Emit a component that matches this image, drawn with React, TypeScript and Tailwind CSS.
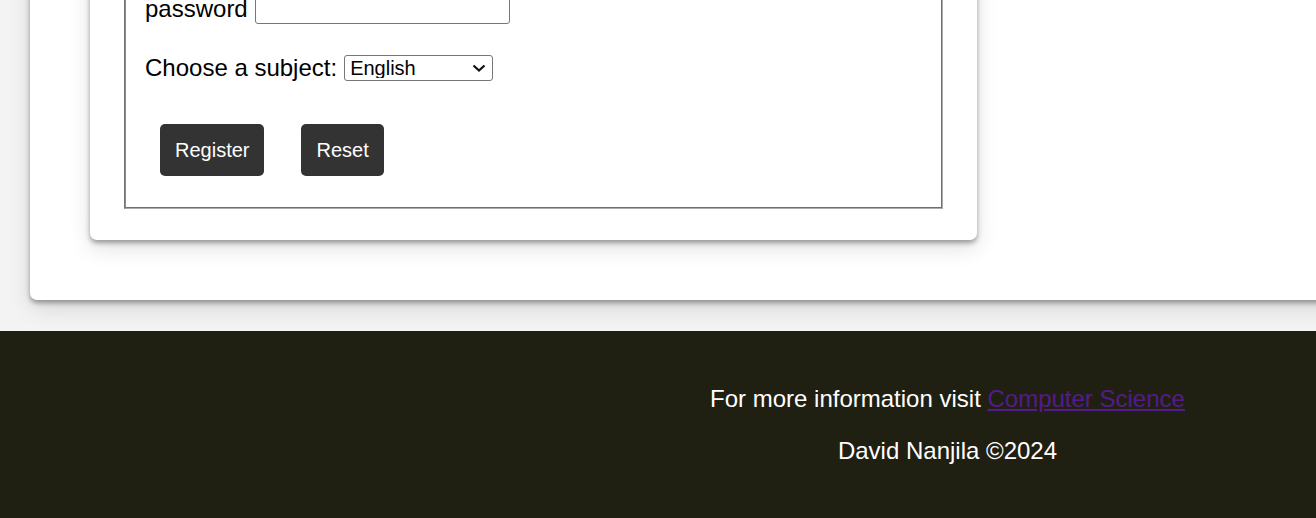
const App = () => {
  return (
    <div className="min-h-screen overflow-hidden bg-[#f3f3f3] font-['Liberation_Sans',Arial,sans-serif] text-black">
      {/* page is shown scrolled down, so the top of the card sits above the window */}
      <main className="-mt-[90px] ml-[30px] w-[1330px] rounded-[7px] bg-white pt-[30px] pb-[60px] pl-[60px] shadow-[0_3px_5px_rgba(0,0,0,0.35),0_8px_22px_rgba(0,0,0,0.12)]">
        <div className="w-[887px] rounded-[7px] bg-white px-[34px] pt-[30px] pb-[31px] shadow-[0_3px_5px_rgba(0,0,0,0.35),0_8px_22px_rgba(0,0,0,0.12)]">
          <form onSubmit={(e) => e.preventDefault()}>
            {/* groove border, drawn as two 1px rings */}
            <div className="border border-t-[#747474] border-l-[#747474] border-r-[#ababab] border-b-[#ababab]">
              <fieldset className="border border-t-[#8c8c8c] border-l-[#8c8c8c] border-r-[#707070] border-b-[#707070] px-[19px] pt-[24px] pb-[31px]">
                <div className="flex h-[28px] items-end">
                  <label htmlFor="password" className="mb-[1px] mr-[7px] text-[24px] leading-[28px]">
                    password
                  </label>
                  <input
                    id="password"
                    type="password"
                    className="h-[28px] w-[255px] rounded-[3px] border border-[#767676] px-1 text-[20px]"
                  />
                </div>

                <div className="mt-[31px] flex h-[26px] items-center">
                  <label htmlFor="subject" className="mr-[7px] text-[24px] leading-[26px]">
                    Choose a subject:
                  </label>
                  <div className="relative">
                    <select
                      id="subject"
                      defaultValue="English"
                      className="h-[26px] w-[149px] appearance-none rounded-[3px] border border-[#767676] pl-[5px] text-[20px] leading-none"
                    >
                      <option>English</option>
                      <option>Mathematics</option>
                      <option>Computer Science</option>
                    </select>
                    <svg
                      className="pointer-events-none absolute top-[9px] right-[7px]"
                      width="14"
                      height="8"
                      viewBox="0 0 14 8"
                      fill="none"
                    >
                      <path d="M1.5 1.5 7 6.5l5.5-5" stroke="#111" strokeWidth="2.2" />
                    </svg>
                  </div>
                </div>

                <div className="mt-[43px] ml-[15px] flex gap-[37px]">
                  <button
                    type="submit"
                    className="h-[52px] rounded-[5px] bg-[#333333] px-[15px] text-[20px] text-white"
                  >
                    Register
                  </button>
                  <button
                    type="reset"
                    className="h-[52px] rounded-[5px] bg-[#333333] px-[15px] text-[20px] text-white"
                  >
                    Reset
                  </button>
                </div>
              </fieldset>
            </div>
          </form>
        </div>
      </main>

      <footer className="mt-[31px] bg-[#202012] pt-[30px] pb-[60px] pl-[579px] text-center text-[24px] leading-[normal] text-white">
        <p className="mt-[24px]">
          For more information visit{' '}
          <a href="#" className="text-[#551a8b] underline">
            Computer Science
          </a>
        </p>
        <p className="mt-[24px]">David Nanjila ©2024</p>
      </footer>
    </div>
  );
};

export default App;
